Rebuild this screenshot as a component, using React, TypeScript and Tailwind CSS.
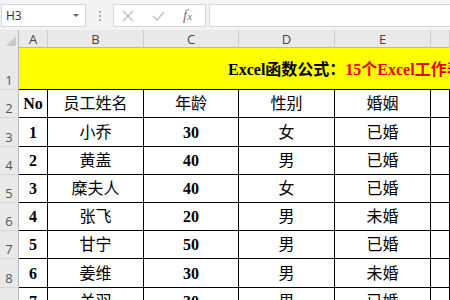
const cols = 'grid-cols-[19px_29px_96px_95px_96px_96px_19px]'

const rows: string[][] = [
  ['No', '员工姓名', '年龄', '性别', '婚姻'],
  ['1', '小乔', '30', '女', '已婚'],
  ['2', '黄盖', '40', '男', '已婚'],
  ['3', '糜夫人', '40', '女', '已婚'],
  ['4', '张飞', '20', '男', '未婚'],
  ['5', '甘宁', '50', '男', '已婚'],
  ['6', '姜维', '30', '男', '未婚'],
  ['7', '关羽', '30', '男', '已婚'],
]

const serif = "font-['Liberation_Serif','Noto_Sans_CJK_SC',serif]"
const ui = "font-['Open_Sans','Liberation_Sans',sans-serif]"

function FormulaBar() {
  return (
    <div className={`h-[30px] bg-[#f3f3f3] flex items-center gap-0 pt-[1px] ${ui}`}>
      <div className="ml-[1px] w-[85px] h-[23px] bg-white border border-[#d6d6d6] flex items-center justify-between px-1">
        <span className="text-[12px] text-[#333]">H3</span>
        <span className="w-0 h-0 border-l-[3px] border-r-[3px] border-t-[3px] border-l-transparent border-r-transparent border-t-[#666] mr-[2px]" />
      </div>
      <div className="w-[27px] flex flex-col items-center gap-[2px]">
        <span className="w-[2px] h-[2px] bg-[#aaa]" />
        <span className="w-[2px] h-[2px] bg-[#aaa]" />
        <span className="w-[2px] h-[2px] bg-[#aaa]" />
      </div>
      <div className="w-[93px] h-[23px] bg-white border border-[#d6d6d6] flex items-center">
        <svg width="12" height="12" viewBox="0 0 12 12" className="ml-[8px]">
          <path d="M1 1 L11 11 M11 1 L1 11" stroke="#bcbcbc" strokeWidth="1.2" fill="none" />
        </svg>
        <svg width="13" height="10" viewBox="0 0 13 10" className="ml-[18px]">
          <path d="M1 5 L5 9 L12 1" stroke="#c4c4c4" strokeWidth="1.6" fill="none" />
        </svg>
        <span className={`ml-[18px] italic text-[15px] text-[#777] ${serif}`}>
          f<span className="text-[11px]">x</span>
        </span>
      </div>
      <div className="ml-[3px] flex-1 h-[23px] bg-white border border-[#d6d6d6] border-r-0" />
    </div>
  )
}

function ColumnHeader() {
  const letters = ['A', 'B', 'C', 'D', 'E', '']
  return (
    <div className={`grid ${cols} h-[18px] bg-[#e9e9e9] ${ui}`}>
      <div className="relative border-r border-[#b8b8b8]">
        <span className="absolute right-[2px] bottom-[2px] w-0 h-0 border-l-[10px] border-t-[10px] border-l-transparent border-t-transparent border-r-0 border-b-[0px]" />
        <svg width="10" height="10" viewBox="0 0 10 10" className="absolute right-[2px] bottom-[2px]">
          <path d="M10 0 L10 10 L0 10 Z" fill="#c8c8c8" />
        </svg>
      </div>
      {letters.map((l, i) => (
        <div key={i} className="flex items-end justify-center pb-[1px] text-[13px] leading-none text-[#444] border-r border-[#cfcfcf] border-b border-b-[#b8b8b8]">
          {l}
        </div>
      ))}
    </div>
  )
}

function RowNum({ n, h }: { n: number; h: string }) {
  return (
    <div className={`${h} bg-[#e9e9e9] border-r border-[#b8b8b8] border-b border-b-[#d4d4d4] flex items-end justify-center pb-[2px] text-[13px] leading-none text-[#555] ${ui}`}>
      {n}
    </div>
  )
}

export default function App() {
  return (
    <div className="w-[450px] h-[300px] overflow-hidden bg-white">
      <FormulaBar />
      <ColumnHeader />
      <div className={`grid ${cols}`}>
        <RowNum n={1} h="h-[42px]" />
        <div className={`col-span-6 h-[42px] bg-[#ffff00] border-b border-black flex items-center pl-[209px] pt-[3px] whitespace-nowrap overflow-hidden text-[16px] font-bold ${serif}`}>
          <span className="text-black">Excel函数公式：</span>
          <span className="text-[#ee0000]">15个Excel工作表常用技巧</span>
        </div>
        {rows.map((r, ri) => (
          <Row key={ri} n={ri + 2} cells={r} />
        ))}
      </div>
    </div>
  )
}

function Row({ n, cells }: { n: number; cells: string[] }) {
  const h = n === 3 || n === 8 ? 'h-[29px]' : 'h-[28px]'
  return (
    <>
      <RowNum n={n} h={h} />
      {cells.map((c, i) => {
        const isNum = /^[0-9A-Za-z]+$/.test(c)
        return (
          <div
            key={i}
            className={`${h} border-r border-b border-black flex items-center justify-center pt-[1px] text-[16px] text-black ${serif} ${isNum ? 'font-bold' : 'font-normal'}`}
          >
            {c}
          </div>
        )
      })}
      <div className={`${h} border-r border-b border-black`} />
    </>
  )
}
